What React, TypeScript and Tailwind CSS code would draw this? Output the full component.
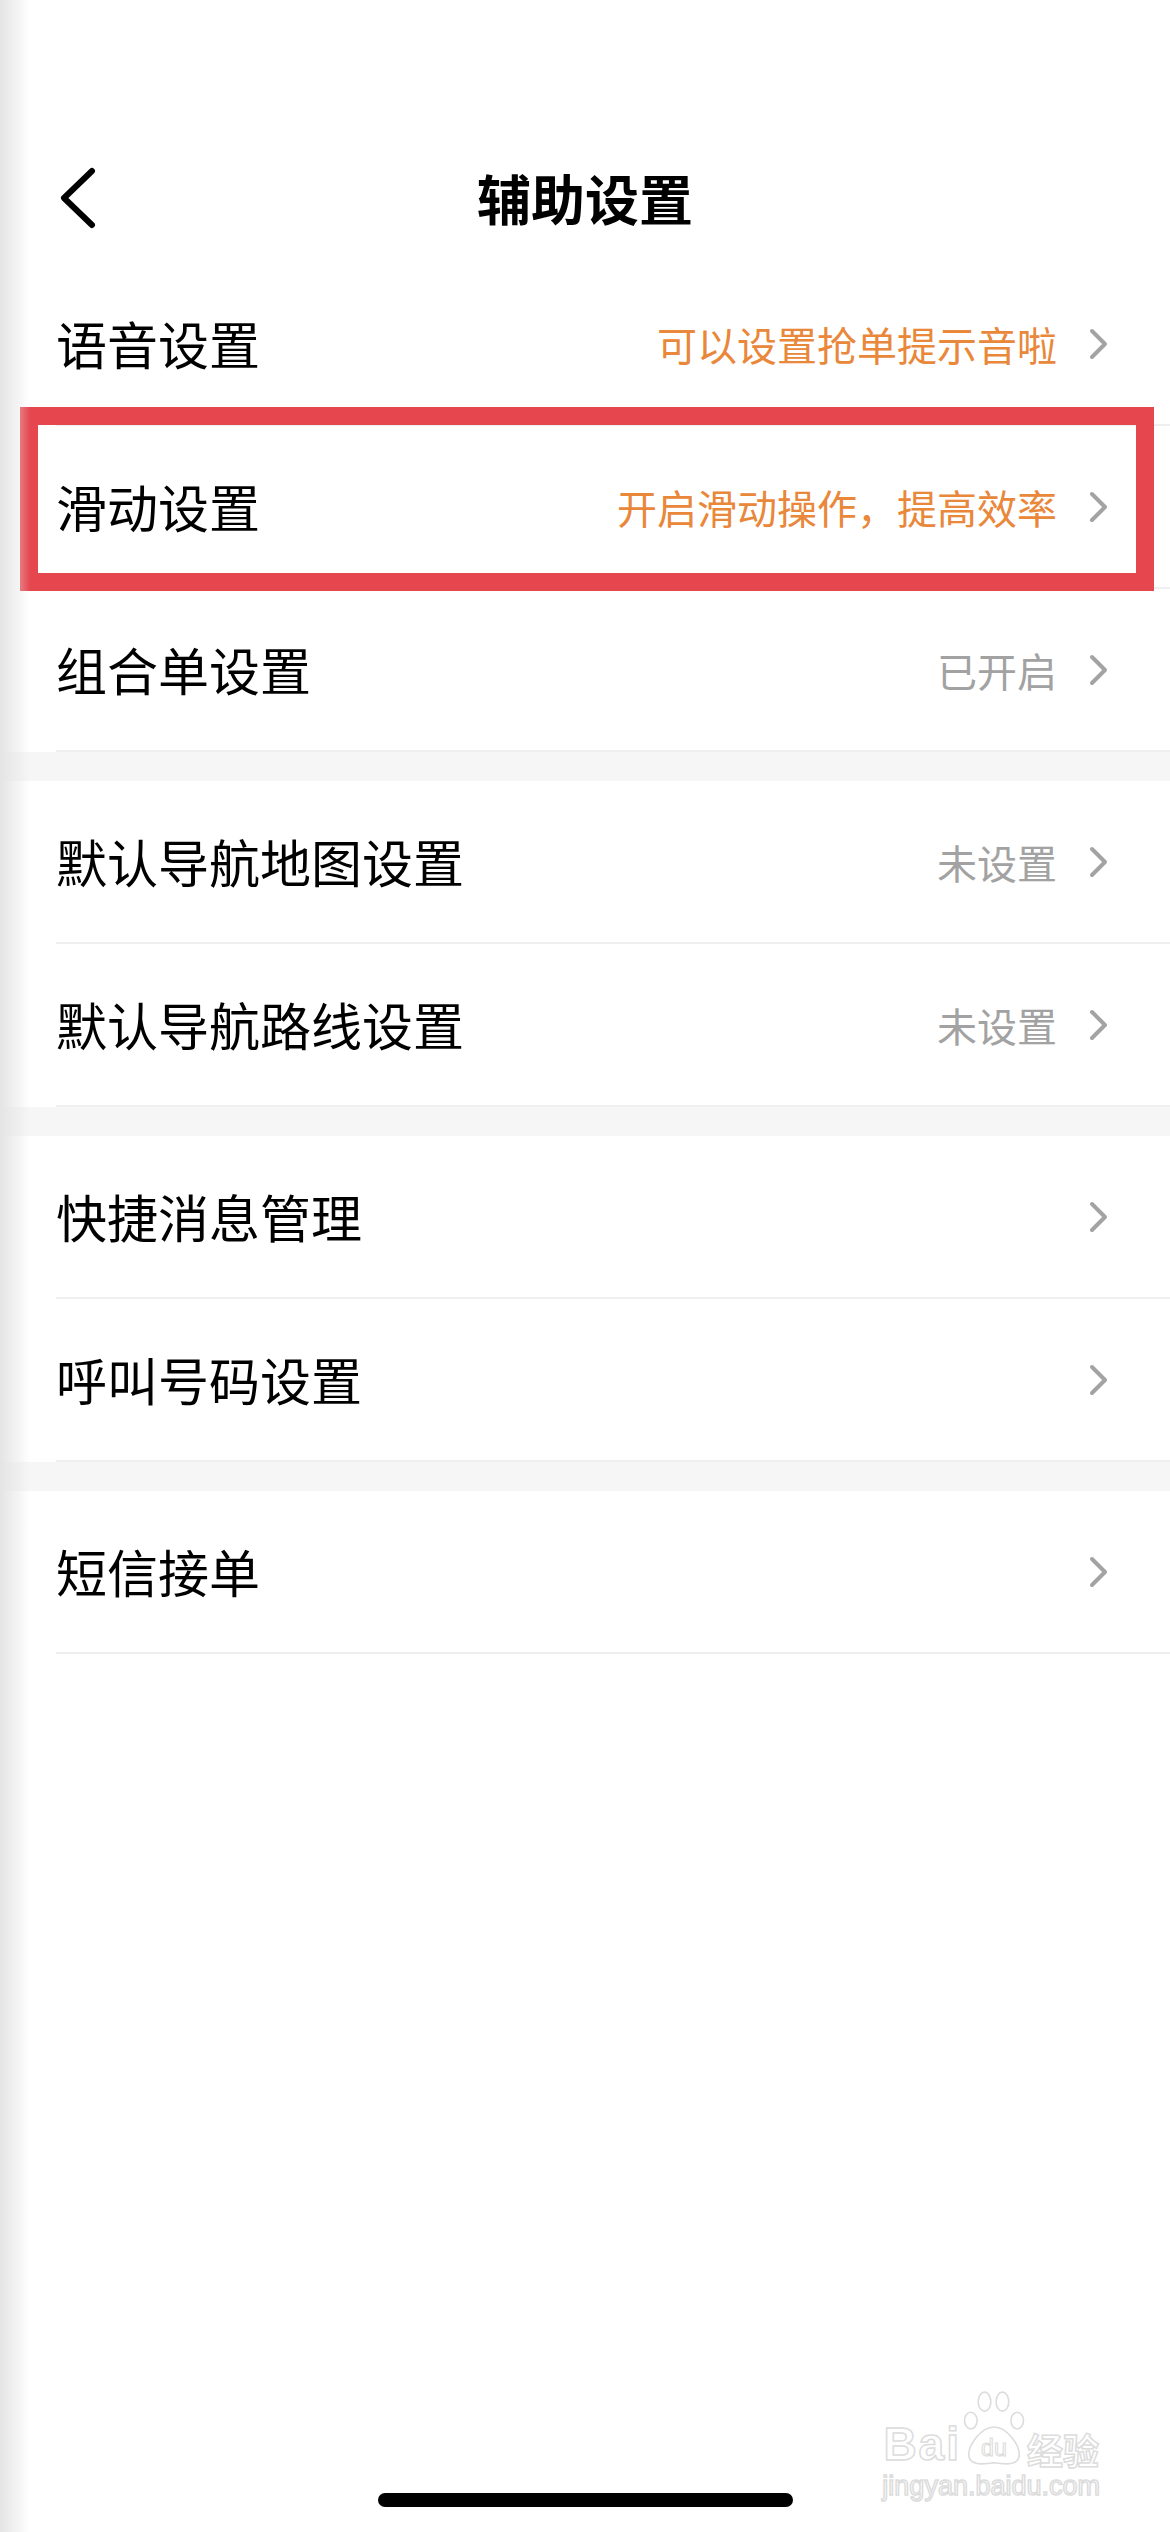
import React from "react";

type Row = {
  label: string;
  hint?: string;
  accent?: boolean;
  marked?: boolean;
};

const sections: Row[][] = [
  [
    { label: "语音设置", hint: "可以设置抢单提示音啦", accent: true },
    { label: "滑动设置", hint: "开启滑动操作，提高效率", accent: true, marked: true },
    { label: "组合单设置", hint: "已开启" },
  ],
  [
    { label: "默认导航地图设置", hint: "未设置" },
    { label: "默认导航路线设置", hint: "未设置" },
  ],
  [{ label: "快捷消息管理" }, { label: "呼叫号码设置" }],
  [{ label: "短信接单" }],
];

function BackIcon() {
  return (
    <svg width="40" height="62" viewBox="0 0 40 62" fill="none">
      <polyline
        points="34,4 6,31 34,58"
        stroke="#000"
        strokeWidth="6"
        strokeLinecap="round"
        strokeLinejoin="round"
      />
    </svg>
  );
}

function Chevron() {
  return (
    <svg width="20" height="32" viewBox="0 0 20 32" fill="none">
      <polyline
        points="3,3 16,16 3,29"
        stroke="#a3a3a3"
        strokeWidth="4"
        strokeLinecap="round"
        strokeLinejoin="round"
      />
    </svg>
  );
}

function SettingRow({ row }: { row: Row }) {
  return (
    <div className="relative h-[163px] pl-[56px]">
      <div className="flex h-full items-center justify-between border-b-2 border-[#efefef] pr-[61px]">
        <span className="text-[51px] leading-none text-black">{row.label}</span>
        <div className="flex items-center gap-[32px]">
          {row.hint && (
            <span
              className={
                row.accent
                  ? "text-[40px] leading-none text-[#e9873a]"
                  : "text-[40px] leading-none text-[#a2a2a2]"
              }
            >
              {row.hint}
            </span>
          )}
          <Chevron />
        </div>
      </div>
      {/* red annotation frame */}
      {row.marked && (
        <div className="pointer-events-none absolute top-[-19px] bottom-[-2px] left-[20px] right-[16px] border-[18px] border-[#e6474f]" />
      )}
    </div>
  );
}

function Watermark() {
  const outline = "text-transparent [-webkit-text-stroke:1.5px_#dcdcdc]";
  return (
    <div className="pointer-events-none absolute bottom-[32px] right-[70px] flex flex-col items-center">
      <div className="flex items-end">
        <span className={`${outline} text-[46px] font-bold leading-none tracking-[2px] font-['Liberation_Sans',sans-serif]`}>
          Bai
        </span>
        <svg width="66" height="78" viewBox="0 0 62 74" fill="none" stroke="#dcdcdc" strokeWidth="1.5">
          <ellipse cx="9" cy="30" rx="6" ry="8" />
          <ellipse cx="22" cy="12" rx="6" ry="9" />
          <ellipse cx="39" cy="12" rx="6" ry="9" />
          <ellipse cx="53" cy="30" rx="6" ry="8" />
          <path d="M31 36 C 18 36, 7 54, 7 62 C 7 72, 18 72, 31 70 C 44 72, 55 72, 55 62 C 55 54, 44 36, 31 36 Z" />
          <text x="31" y="64" textAnchor="middle" fontSize="22" fontFamily="Liberation Sans" fill="none" stroke="#dcdcdc" strokeWidth="1">
            du
          </text>
        </svg>
        <span className={`${outline} text-[36px] font-bold leading-none font-['Noto_Sans_CJK_SC',sans-serif]`}>
          经验
        </span>
      </div>
      <span className={`${outline} mt-[6px] text-[27px] leading-none font-['Liberation_Sans',sans-serif]`}>
        jingyan.baidu.com
      </span>
    </div>
  );
}

export default function App() {
  return (
    <div className="relative flex min-h-screen flex-col bg-white font-['Noto_Sans_CJK_SC','Noto_Sans',sans-serif]">
      {/* status bar space */}
      <div className="h-[132px]" />

      {/* nav bar */}
      <div className="grid h-[131px] grid-cols-[1fr_auto_1fr] items-center">
        <div className="pl-[58px]">
          <BackIcon />
        </div>
        <h1 className="text-[54px] font-bold leading-none text-black">辅助设置</h1>
        <div />
      </div>

      {/* settings list */}
      <div className="flex flex-col gap-[29px] bg-[#f6f6f6]">
        {sections.map((section, i) => (
          <div key={i} className="bg-white">
            {section.map((row) => (
              <SettingRow key={row.label} row={row} />
            ))}
          </div>
        ))}
      </div>

      <div className="flex-1 bg-white" />

      {/* home indicator */}
      <div className="flex justify-center pb-[25px]">
        <div className="h-[14px] w-[415px] rounded-full bg-black" />
      </div>

      <Watermark />

      {/* left edge shadow from page transition */}
      <div className="pointer-events-none absolute inset-y-0 left-0 w-[30px] bg-gradient-to-r from-[#e4e4e4] to-transparent" />
    </div>
  );
}
